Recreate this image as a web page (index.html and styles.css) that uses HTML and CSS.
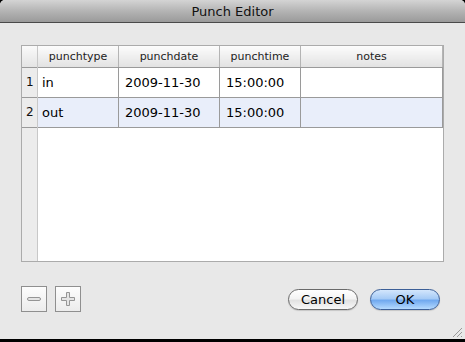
FILE: index.html
```html
<!DOCTYPE html>
<html lang="en">

<head>
    <meta charset="UTF-8">
    <title>Punch Editor</title>
    <link rel="stylesheet" href="styles.css">
</head>

<body>
    <div class="window">
        <div class="titlebar">Punch Editor</div>
        <div class="content">
            <div class="pane">
                <div class="rowhead">
                    <div class="corner"></div>
                    <div class="num">1</div>
                    <div class="num">2</div>
                </div>
                <table class="grid">
                    <thead>
                        <tr>
                            <th class="c1">punchtype</th>
                            <th class="c2">punchdate</th>
                            <th class="c3">punchtime</th>
                            <th class="c4">notes</th>
                        </tr>
                    </thead>
                    <tbody>
                        <tr>
                            <td>in</td>
                            <td>2009-11-30</td>
                            <td>15:00:00</td>
                            <td></td>
                        </tr>
                        <tr class="alt">
                            <td>out</td>
                            <td>2009-11-30</td>
                            <td>15:00:00</td>
                            <td></td>
                        </tr>
                    </tbody>
                </table>
            </div>
            <div class="footer">
                <div class="tools">
                    <span class="tool">
                        <svg width="24" height="24" viewBox="0 0 24 24">
                            <rect x="5.5" y="10.5" width="13" height="3" rx="1.5" fill="#e4e4e4" stroke="#959595"/>
                        </svg>
                    </span>
                    <span class="tool">
                        <svg width="24" height="24" viewBox="0 0 24 24">
                            <path d="M10.5 5.5 h3 v5 h5 v3 h-5 v5 h-3 v-5 h-5 v-3 h5 z" fill="#e4e4e4" stroke="#959595" stroke-linejoin="round"/>
                        </svg>
                    </span>
                </div>
                <div class="actions">
                    <button class="btn">Cancel</button>
                    <button class="btn ok">OK</button>
                </div>
            </div>
            <svg class="grip" width="12" height="12" viewBox="0 0 12 12">
                <path d="M11 2 L2 11 M11 6 L6 11 M11 10 L10 11" stroke="#9a9a9a" stroke-width="1" fill="none"/>
            </svg>
        </div>
    </div>
</body>

</html>
```

FILE: styles.css
```css
html, body {
    margin: 0;
    padding: 0;
    background: #000;
}
.window {
    width: 465px;
    height: 339px;
    display: flex;
    flex-direction: column;
    background: #e8e8e8;
    border-radius: 5px 5px 0 0;
    overflow: hidden;
    font-family: "DejaVu Sans", "Liberation Sans", sans-serif;
}
.titlebar {
    height: 22px;
    line-height: 23px;
    text-align: center;
    font-size: 13px;
    color: #111;
    background: linear-gradient(#d4d4d4, #b4b4b4 50%, #9a9a9a);
    border-bottom: 1px solid #4a4a4a;
}
.content {
    flex: 1;
    padding: 22px 21px 0 21px;
    position: relative;
    display: flex;
    flex-direction: column;
}
.pane {
    height: 215px;
    border: 1px solid #ababab;
    background: #fff;
    display: flex;
}
.rowhead {
    width: 15px;
    background: #ececec;
    border-right: 1px solid #c8c8c8;
    display: flex;
    flex-direction: column;
}
.corner {
    height: 21px;
    border-bottom: 1px solid #9a9a9a;
    background: linear-gradient(#fafafa, #e4e4e4);
}
.num {
    height: 29px;
    line-height: 29px;
    border-bottom: 1px solid #9a9a9a;
    font-size: 12px;
    padding-left: 4px;
    color: #111;
}
.grid {
    border-collapse: collapse;
    table-layout: fixed;
    width: 404px;
    height: 82px;
    font-size: 13px;
}
.grid th {
    height: 21px;
    padding: 0;
    font-weight: normal;
    font-size: 11px;
    color: #222;
    background: linear-gradient(#fcfcfc, #efefef 50%, #e2e2e2);
    border-right: 1px solid #b4b4b4;
    border-bottom: 1px solid #9a9a9a;
}
.grid .c1 { width: 80px; }
.grid .c2 { width: 100px; }
.grid .c3 { width: 80px; }
.grid .c4 { width: 141px; }
.grid td {
    height: 29px;
    padding: 0 0 0 6px;
    color: #000;
    border-right: 1px solid #9a9a9a;
    border-bottom: 1px solid #9a9a9a;
    white-space: nowrap;
}
.grid td:first-child {
    padding-left: 4px;
}
.grid .alt td {
    background: #e9eefa;
}
.footer {
    display: flex;
    justify-content: space-between;
    align-items: flex-start;
    padding-top: 24px;
}
.tools {
    display: flex;
    gap: 8px;
}
.tool {
    width: 24px;
    height: 24px;
    border: 1px solid #8f8f8f;
    background: linear-gradient(#fdfdfd, #ececec);
}
.tool svg {
    display: block;
}
.actions {
    display: flex;
    gap: 12px;
    margin-top: 3px;
    margin-right: 4px;
}
.btn {
    width: 70px;
    height: 21px;
    padding: 0;
    font-family: "DejaVu Sans", "Liberation Sans", sans-serif;
    font-size: 13px;
    color: #000;
    border: 1px solid #6a6a6a;
    border-radius: 11px;
    background: linear-gradient(#ffffff, #f4f4f4 45%, #e2e2e2 55%, #f8f8f8);
    box-shadow: 0 1px 1px rgba(0, 0, 0, 0.15);
}
.btn.ok {
    border-color: #3c5f97;
    background: linear-gradient(#d3e6fc, #a6cbf6 45%, #71a9ef 55%, #b5daff);
}
.grip {
    position: absolute;
    right: 2px;
    bottom: 1px;
}
```
